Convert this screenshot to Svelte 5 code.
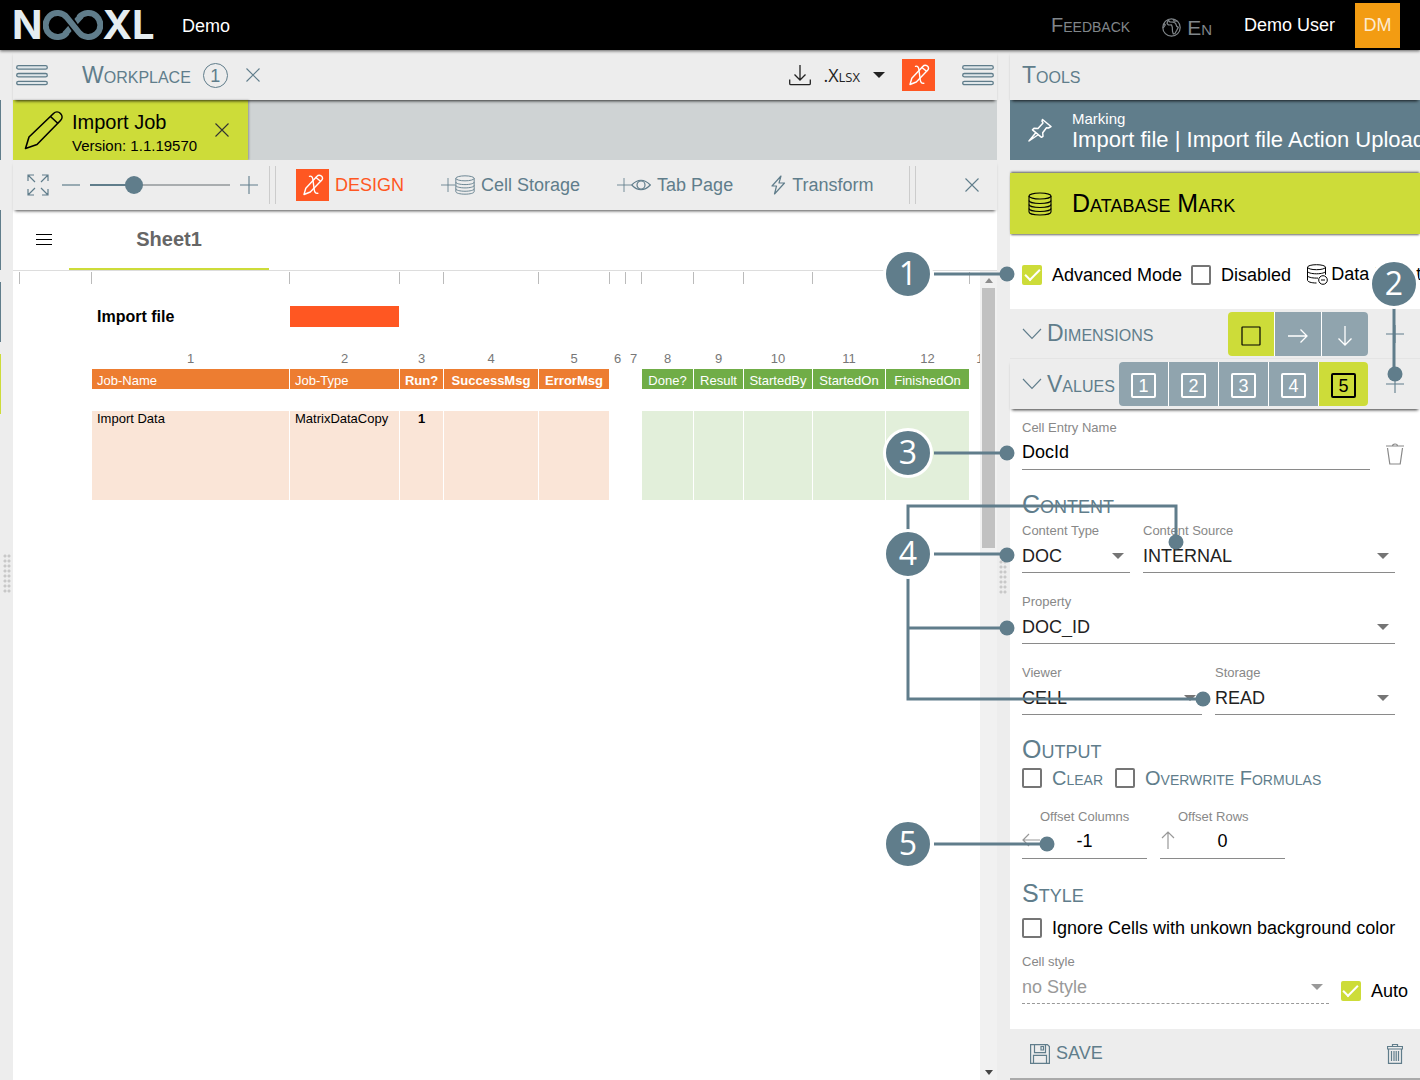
<script lang="ts">
  type Column = {
    width: number;
    index?: string;
    header?: string;
    value?: string;
    kind?: 'input' | 'output';
    align?: 'left' | 'center';
  };

  const columns: Column[] = [
    { width: 72 },
    { width: 198, index: '1', header: 'Job-Name', value: 'Import Data', kind: 'input', align: 'left' },
    { width: 110, index: '2', header: 'Job-Type', value: 'MatrixDataCopy', kind: 'input', align: 'left' },
    { width: 44, index: '3', header: 'Run?', value: '1', kind: 'input' },
    { width: 95, index: '4', header: 'SuccessMsg', kind: 'input' },
    { width: 71, index: '5', header: 'ErrorMsg', kind: 'input' },
    { width: 16, index: '6' },
    { width: 16, index: '7' },
    { width: 52, index: '8', header: 'Done?', kind: 'output' },
    { width: 50, index: '9', header: 'Result', kind: 'output' },
    { width: 69, index: '10', header: 'StartedBy', kind: 'output' },
    { width: 73, index: '11', header: 'StartedOn', kind: 'output' },
    { width: 84, index: '12', header: 'FinishedOn', kind: 'output' },
    { width: 28, index: '13' }
  ];
  const tableWidth = columns.reduce((sum, c) => sum + c.width, 0);

  const callouts = [
    { n: 1, x: 28, y: 274 },
    { n: 2, x: 514, y: 284 },
    { n: 3, x: 28, y: 453 },
    { n: 4, x: 28, y: 554 },
    { n: 5, x: 28, y: 844 }
  ];
  const pins = [[127, 274], [515, 374], [127, 453], [127, 555], [296, 542], [127, 628], [323, 699], [167, 844]];

  let zoom = $state(29);
  let dimension = $state('cell');
  let selectedValue = $state(5);
  let advanced = $state(true);
  let disabled = $state(false);
  let entryName = $state('DocId');
  let clear = $state(false);
  let overwrite = $state(false);
  let ignoreUnknown = $state(false);
  let autoStyle = $state(true);
  let offsetColumns = $state('-1');
  let offsetRows = $state('0');
</script>

{#snippet menuIcon()}
  <svg width="32" height="24" viewBox="0 0 32 24" fill="#dfe6e9" stroke="#607d8b" stroke-width="1.3">
    <rect x="0.7" y="2.700" width="30.600" height="3.400" rx="1.700" />
    <rect x="0.7" y="10.500" width="30.600" height="3.400" rx="1.700" />
    <rect x="0.7" y="18.300" width="30.600" height="3.400" rx="1.700" />
  </svg>
{/snippet}

{#snippet closeIcon()}
  <svg width="16" height="16" viewBox="0 0 16 16" fill="none" stroke="currentColor" stroke-width="1.1">
    <path d="M1.5 1.5l13 13M14.5 1.5l-13 13" />
  </svg>
{/snippet}

{#snippet plusIcon(size: number)}
  <svg width={size} height={size} viewBox="0 0 18 18" fill="none" stroke="currentColor" stroke-width="1.1">
    <path d="M0 9h18M9 0v18" />
  </svg>
{/snippet}

{#snippet designIcon()}
  <svg width="22" height="24" viewBox="0 0 22 24" fill="none" stroke="#fff" stroke-width="1.4" stroke-linejoin="round" stroke-linecap="round">
    <path d="M2 21.500l1.800-6.200L14.800 3.400c1.200-1.300 3.200-1.400 4.600-.4 1.300 1.200 1.300 3 .2 4.300L8.300 19z" />
    <path d="M14 4.500l4.500 3.800" />
    <path d="M7.500 3.300c2-.6 3 .7 3.300 2.700l1.400 10.500c.3 2.500 1.300 4.300 3.600 3.800" />
  </svg>
{/snippet}

{#snippet databaseIcon(size: number)}
  <svg width={size} height={size} viewBox="0 0 24 24" fill="none" stroke="currentColor" stroke-width="1.1">
    <ellipse cx="12" cy="4" rx="11" ry="3" />
    <path d="M1 4v16c0 1.700 4.900 3 11 3s11-1.300 11-3V4" />
    <path d="M1 8.500c0 1.700 4.900 3 11 3s11-1.300 11-3M1 12.500c0 1.700 4.900 3 11 3s11-1.300 11-3M1 16.500c0 1.700 4.900 3 11 3s11-1.300 11-3" />
  </svg>
{/snippet}

{#snippet caret()}
  <svg class="caret" width="12" height="6" viewBox="0 0 12 6"><path d="M0 0h12L6 6z" fill="currentColor" /></svg>
{/snippet}

{#snippet chevron()}
  <svg width="20" height="12" viewBox="0 0 20 12" fill="none" stroke="currentColor" stroke-width="1.1">
    <path d="M1 1l9 9.500L19 1" />
  </svg>
{/snippet}

{#snippet grip()}
  <div class="grip"></div>
{/snippet}

<div class="app">
  <header class="topbar">
    <div class="logo">
      <span>N</span>
      <svg width="60" height="30" viewBox="0 0 60 30" fill="none" stroke="#607d8b" stroke-width="6">
        <path d="M22 24L38 6" />
        <path d="M24 6L36 24" stroke="#000" stroke-width="9" />
        <path d="M24 22.500A12 12 0 1 1 24 7.500L36 22.500A12 12 0 1 0 36 7.500" stroke-linejoin="round" />
      </svg>
      <span>XL</span>
    </div>
    <span class="tenant">Demo</span>
    <a class="feedback" href="#feedback">Feedback</a>
    <button class="language">
      <svg width="19" height="19" viewBox="0 0 19 19" fill="none" stroke="currentColor" stroke-width="1.200" stroke-linejoin="round">
        <circle cx="9.500" cy="9.500" r="8.700" />
        <path d="M6 2.500l-1 3 1.500 1.500 3-.2.8 2.500.2 4 .8 2.700 1.500-.3 2-3.500 1.500-3-1.500-.8-1.300-3.200-2-1-3.500-.2-1.500-1.500zM2 5.500l1.300 1.500L1.200 10M11 1.200l1.300 2 3-.2" />
      </svg>
      <span>En</span>
    </button>
    <span class="user">Demo User</span>
    <span class="avatar">DM</span>
  </header>

  <main class="layout">
    <nav class="rail">
      <span class="rail-tile"></span>
      <span class="rail-tile second"></span>
      <span class="rail-tile"></span>
      <span class="rail-tile active"></span>
      {@render grip()}
    </nav>

    <section class="workplace">
      <div class="panel-head">
        <button class="menu" aria-label="Menu">{@render menuIcon()}</button>
        <h2>Workplace</h2>
        <span class="count">1</span>
        <button class="icon" aria-label="Close workplace">{@render closeIcon()}</button>
        <button class="export">
          <svg width="22" height="22" viewBox="0 0 22 22" fill="none" stroke="currentColor" stroke-width="1.300">
            <path d="M11 1v14.500M5.500 10.500l5.500 5.500 5.500-5.500M.7 15.500v4c0 .8.5 1.200 1.200 1.200h18.200c.8 0 1.200-.5 1.200-1.200v-4" />
          </svg>
          <span>.Xlsx</span>
          {@render caret()}
        </button>
        <button class="design-box" aria-label="Design">{@render designIcon()}</button>
        <button class="menu" aria-label="Tools menu">{@render menuIcon()}</button>
      </div>

      <div class="tabs">
        <div class="tab">
          <svg width="40" height="40" viewBox="0 0 40 40" fill="none" stroke="#000" stroke-width="1.600" stroke-linejoin="round">
            <path d="M1.500 38.500L5 27 29.500 3.500c2-2 5-2 7 0s2 5 0 7L13 34.500z" />
            <path d="M26.500 6.500l7.500 7" />
          </svg>
          <div class="tab-text">
            <strong>Import Job</strong>
            <span>Version: 1.1.19570</span>
          </div>
          <button class="icon" aria-label="Close tab">{@render closeIcon()}</button>
        </div>
      </div>

      <div class="toolbar">
        <div class="zoom">
          <button class="icon" aria-label="Fit">
            <svg width="22" height="22" viewBox="0 0 22 22" fill="none" stroke="currentColor" stroke-width="1.200">
              <path d="M1 7V1h6M1 1l7 7M15 1h6v6M21 1l-7 7M1 15v6h6M1 21l7-7M15 21h6v-6M21 21l-7-7" />
            </svg>
          </button>
          <button class="icon minus" aria-label="Zoom out">
            <svg width="18" height="18" viewBox="0 0 18 18" stroke="currentColor" stroke-width="1.200"><path d="M0 9h18" /></svg>
          </button>
          <input type="range" min="0" max="100" bind:value={zoom} aria-label="Zoom" />
          <button class="icon" aria-label="Zoom in">{@render plusIcon(18)}</button>
        </div>
        <span class="divider"></span>
        <div class="actions">
          <button class="action design">
            <span class="design-box">{@render designIcon()}</span>
            DESIGN
          </button>
          <button class="action">
            <span class="pair">{@render plusIcon(14)}{@render databaseIcon(20)}</span>
            Cell Storage
          </button>
          <button class="action">
            <span class="pair">
              {@render plusIcon(14)}
              <svg width="20" height="20" viewBox="0 0 20 20" fill="none" stroke="currentColor" stroke-width="1.200">
                <path d="M.7 10Q10 .5 19.300 10 10 19.500.7 10z" />
                <circle cx="10" cy="10" r="4" />
              </svg>
            </span>
            Tab Page
          </button>
          <button class="action bolt">
            <svg width="16" height="20" viewBox="0 0 16 20" fill="none" stroke="currentColor" stroke-width="1.200" stroke-linejoin="round">
              <path d="M11 1L2 11h4.500L4.500 19 14.500 8H9z" />
            </svg>
            Transform
          </button>
        </div>
        <span class="divider"></span>
        <button class="icon last" aria-label="Close toolbar">{@render closeIcon()}</button>
      </div>

      <div class="sheet">
        <div class="sheet-tabs">
          <button class="icon dark" aria-label="Sheets">
            <svg width="16" height="12" viewBox="0 0 16 12" stroke="#000" stroke-width="1"><path d="M0 .5h16M0 5.500h16M0 10.500h16" /></svg>
          </button>
          <button class="sheet-tab">Sheet1</button>
        </div>
        <div class="sheet-body">
          <div class="grid-wrap">
            <table style="width: {tableWidth}px">
              <colgroup>
                {#each columns as col}<col style="width: {col.width}px" />{/each}
              </colgroup>
              <tbody>
                <tr class="ruler">{#each columns as _}<td></td>{/each}</tr>
                <tr class="gap"><td colspan={columns.length}></td></tr>
                <tr class="file">
                  <td></td>
                  <th scope="row">Import file</th>
                  <td class="upload"></td>
                  <td colspan={columns.length - 3}></td>
                </tr>
                <tr class="gap"><td colspan={columns.length}></td></tr>
                <tr class="index">
                  {#each columns as col}<td>{col.index ?? ''}</td>{/each}
                </tr>
                <tr class="names">
                  {#each columns as col, i}
                    <td class="{col.kind ?? ''} {col.align ?? ''}" class:bold={i > 2 && i < 6}>{col.header ?? ''}</td>
                  {/each}
                </tr>
                <tr class="gap"><td colspan={columns.length}></td></tr>
                <tr class="values">
                  {#each columns as col, i}
                    <td class="{col.kind ?? ''} {col.align ?? ''}" class:bold={i === 3}>{col.value ?? ''}</td>
                  {/each}
                </tr>
              </tbody>
            </table>
          </div>
          <div class="scrollbar">
            <svg width="8" height="5" viewBox="0 0 8 5"><path d="M0 5h8L4 0z" fill="#8d8d8d" /></svg>
            <div class="thumb"></div>
            <svg width="8" height="5" viewBox="0 0 8 5"><path d="M0 0h8L4 5z" fill="#444" /></svg>
          </div>
        </div>
      </div>
    </section>

    <div class="splitter">{@render grip()}</div>

    <aside class="tools">
      <div class="panel-head"><h2>Tools</h2></div>

      <div class="marking">
        <svg width="24" height="24" viewBox="0 0 24 24" fill="none" stroke="#fff" stroke-width="1.500" stroke-linejoin="round">
          <path d="M14.500 1.500l8.500 7-2.500 1.500-2-.2-3.800 5 .3 3.500-1.500 1-9-7.500 1.500-1.500 4 .2 5-5.500-1-1.800zM8 14.500L1 23l9.500-6.500" />
        </svg>
        <div class="marking-text">
          <span>Marking</span>
          <strong>Import file | Import file Action Upload</strong>
        </div>
      </div>

      <div class="mark-title">
        {@render databaseIcon(24)}
        <h1>Database Mark</h1>
      </div>

      <div class="modes">
        <label class="check"><input type="checkbox" bind:checked={advanced} />Advanced Mode</label>
        <label class="check"><input type="checkbox" bind:checked={disabled} />Disabled</label>
        <button class="reset">
          <svg width="21" height="21" viewBox="0 0 21 21" fill="none" stroke="currentColor" stroke-width="1">
            <ellipse cx="9.500" cy="3.200" rx="9" ry="2.500" />
            <path d="M.5 3.200v13c0 1.500 3.500 2.800 9 2.800M18.500 3.200v7.500M.5 7.200c0 1.500 4 2.600 9 2.600s9-1.100 9-2.600M.5 11.500c0 1.500 4 2.600 9 2.600h1.500" />
            <circle cx="16" cy="16" r="4.300" fill="#fff" />
            <path d="M14 16h4" />
          </svg>
          <span>Data Reset</span>
        </button>
      </div>

      <div class="section">
        {@render chevron()}
        <h3>Dimensions</h3>
        <div class="segments narrow">
          <button class:on={dimension === 'cell'} onclick={() => (dimension = 'cell')} aria-label="Cell">
            <svg width="20" height="20" viewBox="0 0 20 20" fill="none" stroke="currentColor" stroke-width="1.200"><rect x="1" y="1" width="18" height="18" rx="0.500" /></svg>
          </button>
          <button class:on={dimension === 'row'} onclick={() => (dimension = 'row')} aria-label="Row">
            <svg width="20" height="20" viewBox="0 0 20 20" fill="none" stroke="currentColor" stroke-width="1.300"><path d="M0 10h19M12.500 3.500L19 10l-6.500 6.500" /></svg>
          </button>
          <button class:on={dimension === 'column'} onclick={() => (dimension = 'column')} aria-label="Column">
            <svg width="20" height="20" viewBox="0 0 20 20" fill="none" stroke="currentColor" stroke-width="1.300"><path d="M10 0v19M3.500 12.500L10 19l6.500-6.500" /></svg>
          </button>
        </div>
        <button class="icon add" aria-label="Add dimension">{@render plusIcon(18)}</button>
      </div>
      <div class="section last">
        {@render chevron()}
        <h3>Values</h3>
        <div class="segments">
          {#each [1, 2, 3, 4, 5] as n}
            <button class:on={selectedValue === n} onclick={() => (selectedValue = n)}><span>{n}</span></button>
          {/each}
        </div>
        <button class="icon add" aria-label="Add value">{@render plusIcon(18)}</button>
      </div>

      <div class="form">
        <div class="row name">
          <label class="field">
            <span>Cell Entry Name</span>
            <input type="text" bind:value={entryName} />
          </label>
          <button class="icon trash" aria-label="Delete entry">
            <svg width="20" height="22" viewBox="0 0 20 22" fill="none" stroke="currentColor" stroke-width="1.200">
              <path d="M1 3h18M7.500 3c0-2.700 5-2.700 5 0M2.500 5l2.300 16h10.400L17.500 5" />
            </svg>
          </button>
        </div>

        <h4>Content</h4>
        <div class="row content">
          <label class="field">
            <span>Content Type</span>
            <div class="stack"><select><option>DOC</option></select>{@render caret()}</div>
          </label>
          <label class="field">
            <span>Content Source</span>
            <div class="stack"><select><option>INTERNAL</option></select>{@render caret()}</div>
          </label>
        </div>
        <div class="row spaced">
          <label class="field">
            <span>Property</span>
            <div class="stack"><select><option>DOC_ID</option></select>{@render caret()}</div>
          </label>
        </div>
        <div class="row halves spaced">
          <label class="field">
            <span>Viewer</span>
            <div class="stack"><select><option>CELL</option></select>{@render caret()}</div>
          </label>
          <label class="field">
            <span>Storage</span>
            <div class="stack"><select><option>READ</option></select>{@render caret()}</div>
          </label>
        </div>

        <h4>Output</h4>
        <div class="checks">
          <label class="check caps"><input type="checkbox" bind:checked={clear} />Clear</label>
          <label class="check caps"><input type="checkbox" bind:checked={overwrite} />Overwrite Formulas</label>
        </div>
        <div class="offsets spaced">
          <label class="field">
            <span>Offset Columns</span>
            <div class="stack">
              <input type="text" bind:value={offsetColumns} />
              <svg class="lead" width="18" height="18" viewBox="0 0 18 18" fill="none" stroke="currentColor" stroke-width="1.200"><path d="M18 9H1M7 3L1 9l6 6" /></svg>
            </div>
          </label>
          <label class="field">
            <span>Offset Rows</span>
            <div class="stack">
              <input type="text" bind:value={offsetRows} />
              <svg class="lead" width="18" height="18" viewBox="0 0 18 18" fill="none" stroke="currentColor" stroke-width="1.200"><path d="M8 18V1M2 7l6-6 6 6" /></svg>
            </div>
          </label>
        </div>

        <h4>Style</h4>
        <div class="ignore">
          <label class="check"><input type="checkbox" bind:checked={ignoreUnknown} />Ignore Cells with unkown background color</label>
        </div>
        <div class="style-row">
          <label class="field off">
            <span>Cell style</span>
            <div class="stack"><select disabled={autoStyle}><option>no Style</option></select>{@render caret()}</div>
          </label>
          <label class="check"><input type="checkbox" bind:checked={autoStyle} />Auto</label>
        </div>
      </div>

      <footer class="savebar">
        <button class="action">
          <svg width="20" height="20" viewBox="0 0 20 20" fill="none" stroke="currentColor" stroke-width="1.200">
            <path d="M.6.6h16.800l2 2v16.800H.6zM4.500.6v8h11v-8M3.500 19.400v-8h13v8M11 2.500h2.500v3.500H11z" />
          </svg>
          SAVE
        </button>
        <button class="icon" aria-label="Delete">
          <svg width="16" height="20" viewBox="0 0 16 20" fill="none" stroke="currentColor" stroke-width="1.200">
            <path d="M.5 2.500h15v2.500H.5zM5.500 2.500v-2h5v2M1.500 5v14.400h13V5M4.500 7v10M7 7v10M9.200 7v10M11.500 7v10" />
          </svg>
        </button>
      </footer>
    </aside>
  </main>

  <svg class="annotations" width="540" height="900" viewBox="0 0 540 900">
    <g class="lead-lines">
      <path d="M54 274H127" />
      <path d="M514 308V374" />
      <path d="M54 453H127" />
      <path d="M28 530V506H296V542" />
      <path d="M54 554H127" />
      <path d="M28 578V699H323M28 628H127" />
      <path d="M54 844H167" />
    </g>
    {#each pins as [x, y]}
      <circle cx={x} cy={y} r="7.500" fill="#607d8b" />
    {/each}
    {#each callouts as c}
      <circle cx={c.x} cy={c.y} r="23.500" fill="#607d8b" stroke="#fff" stroke-width="3" />
      <text x={c.x} y={c.y + 11} text-anchor="middle">{c.n}</text>
    {/each}
  </svg>
</div>

<style>
  :global(body) {
    margin: 0;
    background: #ededed;
  }

  .app {
    --blue: #607d8b;
    --lime: #cddc39;
    --orange: #ff5722;
    position: relative;
    display: flex;
    flex-direction: column;
    min-height: 100vh;
    overflow: hidden;
    font-family: 'Liberation Sans', Arial, sans-serif;
    font-size: 18px;
    color: #000;
  }

  .app * {
    box-sizing: border-box;
  }

  svg {
    display: block;
    flex: none;
  }

  button,
  input,
  select {
    font: inherit;
    color: inherit;
    background: none;
    border: 0;
    border-radius: 0;
    margin: 0;
    padding: 0;
  }

  button {
    cursor: pointer;
  }

  h1, h2, h3, h4 {
    margin: 0;
    font-weight: 400;
    font-variant: small-caps;
  }

  h2, h3 {
    font-size: 23px;
    color: var(--blue);
  }

  .icon {
    display: flex;
    color: var(--blue);
  }

  /* top bar */
  .topbar {
    display: flex;
    align-items: center;
    height: 50px;
    padding: 0 20px 0 12px;
    background: #000;
    color: #fff;
    box-shadow: 0 1px 3px rgba(0, 0, 0, 0.6);
    z-index: 2;
  }

  .logo {
    display: flex;
    align-items: center;
    width: 146px;
    font-family: Inter, sans-serif;
    font-weight: 700;
    font-size: 40px;
    line-height: 48px;
    color: #e4ecf0;
  }

  .tenant {
    margin: 2px auto 0 24px;
  }

  .feedback {
    font-size: 20px;
    font-variant: small-caps;
    color: #80868a;
    text-decoration: none;
  }

  .language {
    display: flex;
    align-items: center;
    gap: 6px;
    margin: 5px 32px 0 32px;
    font-size: 21px;
    font-variant: small-caps;
    color: #80868a;
  }

  .avatar {
    width: 45px;
    margin-left: 20px;
    background: #f39c12;
    line-height: 45px;
    text-align: center;
    color: #fdebd0;
  }

  .layout {
    flex: 1;
    display: grid;
    grid-template-columns: 13px minmax(0, 1fr) 13px 410px;
  }

  /* left rail and splitter */
  .rail {
    display: flex;
    flex-direction: column;
    padding-top: 50px;
  }

  .rail-tile {
    width: 1px;
    height: 60px;
    margin-bottom: 12px;
    background: var(--blue);
  }

  .rail-tile.second {
    margin-top: 38px;
  }

  .rail-tile.active {
    background: var(--lime);
  }

  .grip {
    width: 8px;
    height: 40px;
    background: radial-gradient(circle at 2px 2px, #c8c8c8 1px, transparent 2px) 0 0 / 4px 5px;
  }

  .rail .grip {
    margin: 128px 0 0 3px;
  }

  .splitter {
    padding: 505px 0 0 2px;
  }

  /* workplace */
  .workplace {
    display: flex;
    flex-direction: column;
    min-width: 0;
  }

  .panel-head {
    display: flex;
    align-items: center;
    height: 50px;
    padding: 0 3px;
    box-shadow: 0 3px 3px -2px rgba(0, 0, 0, 0.8);
    z-index: 1;
  }

  .panel-head .menu {
    display: flex;
  }

  .workplace h2 {
    margin-left: 34px;
  }

  .count {
    width: 25px;
    height: 25px;
    margin: 0 17px 0 12px;
    border: 1px solid var(--blue);
    border-radius: 50%;
    line-height: 24px;
    text-align: center;
    color: var(--blue);
  }

  .export {
    display: flex;
    align-items: center;
    margin-left: auto;
    color: #222;
    font-family: 'Open Sans', sans-serif;
    font-size: 18px;
    font-variant: small-caps;
  }

  .export span {
    margin: 0 13px 0 12px;
  }

  .design-box {
    display: grid;
    place-items: center;
    width: 33px;
    height: 32px;
    background: var(--orange);
  }

  .panel-head .design-box {
    margin: 0 27px 0 17px;
  }

  .tabs {
    height: 60px;
    background: #cfd3d4;
  }

  .tab {
    display: flex;
    align-items: center;
    width: 235px;
    height: 60px;
    padding: 0 18px 0 11px;
    background: var(--lime);
    box-shadow: 1px 0 2px rgba(0, 0, 0, 0.3);
  }

  .tab-text {
    flex: 1;
    display: flex;
    flex-direction: column;
    margin: 7px 0 0 8px;
    font-size: 15px;
    line-height: 24px;
    white-space: nowrap;
  }

  .tab-text strong {
    font-size: 20px;
    font-weight: 400;
  }

  .tab .icon {
    color: #333;
  }

  .toolbar {
    display: flex;
    align-items: center;
    height: 50px;
    padding: 0 17px 0 14px;
    background: #ededed;
    box-shadow: 0 3px 3px -2px rgba(0, 0, 0, 0.7);
    z-index: 1;
  }

  .zoom {
    display: flex;
    align-items: center;
    gap: 10px;
    margin-right: 11px;
  }

  .zoom .minus {
    margin-left: 3px;
  }

  input[type='range'] {
    appearance: none;
    width: 140px;
    height: 18px;
    background: linear-gradient(to right, var(--blue) 32%, #a9adaf 32%) center / 100% 2px no-repeat;
  }

  input[type='range']::-webkit-slider-thumb {
    appearance: none;
    width: 18px;
    height: 18px;
    border-radius: 50%;
    background: var(--blue);
  }

  .divider {
    width: 7px;
    height: 38px;
    border: solid #ccc;
    border-width: 0 1px;
  }

  .actions {
    display: flex;
    gap: 37px;
    margin: 0 auto 0 20px;
  }

  .action {
    display: flex;
    align-items: center;
    gap: 6px;
    color: var(--blue);
    white-space: nowrap;
  }

  .action.design {
    color: var(--orange);
  }

  .pair {
    display: flex;
    align-items: center;
  }

  .actions + .divider {
    margin-right: 48px;
  }

  /* sheet */
  .sheet {
    flex: 1;
    display: flex;
    flex-direction: column;
    background: #fff;
  }

  .sheet-tabs {
    display: flex;
    align-items: center;
    height: 61px;
    padding: 0 23px;
    border-bottom: 1px solid #ddd;
  }

  .sheet-tab {
    width: 200px;
    height: 60px;
    margin-left: 17px;
    border-bottom: 2px solid var(--lime);
    font-size: 20px;
    font-weight: 700;
    color: #666;
  }

  .sheet-body {
    flex: 1;
    display: flex;
  }

  .grid-wrap {
    flex: 1;
    min-width: 0;
    padding: 1px 0 0 6px;
    overflow: hidden;
  }

  table {
    table-layout: fixed;
    border-spacing: 0;
    font-size: 13px;
    line-height: 16px;
  }

  td,
  th {
    height: 22px;
    padding: 0;
    border-left: 1px solid #fff;
    text-align: center;
    white-space: nowrap;
  }

  .ruler td {
    height: 12px;
    border-left-color: #bbb;
  }

  .file td,
  .file th {
    height: 21px;
    line-height: 20px;
  }

  .file th {
    padding-left: 5px;
    text-align: left;
    font-size: 16px;
  }

  .file .upload {
    background: var(--orange);
    background-clip: padding-box;
  }

  .index td {
    height: 20px;
    color: #777;
  }

  .names td {
    height: 20px;
    padding-top: 4px;
    color: #fff;
  }

  .names .input {
    background: #ed7d31;
    background-clip: padding-box;
  }

  .names .output {
    background: #70ad47;
    background-clip: padding-box;
  }

  .values td {
    height: 89px;
    vertical-align: top;
  }

  .values .input {
    background: #fae5d7;
    background-clip: padding-box;
  }

  .values .output {
    background: #e2efda;
    background-clip: padding-box;
  }

  td.left {
    padding-left: 5px;
    text-align: left;
  }

  .bold {
    font-weight: 700;
  }

  .scrollbar {
    display: flex;
    flex-direction: column;
    align-items: center;
    width: 17px;
    padding: 7px 0 5px;
    background: #f1f1f1;
  }

  .thumb {
    width: 13px;
    height: 260px;
    margin: 5px 0 auto;
    background: #c1c1c1;
  }

  /* tools */
  .tools {
    display: flex;
    flex-direction: column;
    min-width: 0;
  }

  .tools .panel-head {
    padding: 0 12px;
  }

  .marking,
  .mark-title {
    display: flex;
    align-items: center;
    height: 60px;
    padding-left: 18px;
  }

  .marking {
    gap: 20px;
    margin-bottom: 13px;
    background: var(--blue);
    color: #fff;
    overflow: hidden;
  }

  .marking-text {
    display: flex;
    flex-direction: column;
    padding-top: 2px;
    font-size: 15px;
    line-height: 18px;
    white-space: nowrap;
  }

  .marking-text strong {
    font-size: 22px;
    line-height: 24px;
    font-weight: 400;
  }

  .mark-title {
    gap: 20px;
    height: 61px;
    background: var(--lime);
    box-shadow: 0 2px 2px -1px rgba(0, 0, 0, 0.6), 0 -2px 2px -1px rgba(0, 0, 0, 0.6);
    z-index: 1;
  }

  h1 {
    font-size: 25px;
  }

  .modes {
    display: flex;
    align-items: center;
    height: 75px;
    padding: 6px 0 0 12px;
    background: #fff;
    white-space: nowrap;
    overflow: hidden;
  }

  .check {
    display: flex;
    align-items: center;
    gap: 10px;
    margin-right: 9px;
    line-height: 20px;
    white-space: nowrap;
  }

  .check.caps {
    font-size: 20px;
    font-variant: small-caps;
    color: var(--blue);
    margin-right: 12px;
  }

  input[type='checkbox'] {
    appearance: none;
    display: grid;
    place-items: center;
    flex: none;
    width: 20px;
    height: 20px;
    border: 2px solid #757575;
    border-radius: 2px;
    background: #fff;
  }

  input[type='checkbox']:checked {
    border-color: var(--lime);
    background: var(--lime);
  }

  input[type='checkbox']:checked::before {
    content: '';
    width: 13px;
    height: 6px;
    margin-bottom: 4px;
    border: solid #fff;
    border-width: 0 0 2px 2px;
    transform: rotate(-45deg);
  }

  .reset {
    display: flex;
    align-items: center;
    gap: 3px;
    margin-left: 7px;
  }

  .section {
    display: flex;
    align-items: center;
    height: 50px;
    padding-left: 12px;
    border-bottom: 1px solid #e4e4e4;
    color: var(--blue);
  }

  .section h3 {
    margin-left: 5px;
  }

  .section.last {
    border-bottom: 0;
    box-shadow: 0 3px 3px -2px rgba(0, 0, 0, 0.8);
    z-index: 1;
  }

  .segments {
    display: flex;
    gap: 1px;
    margin-left: auto;
    border-radius: 4px;
    background: #fff;
    overflow: hidden;
  }

  .segments button {
    display: grid;
    place-items: center;
    width: 49px;
    height: 44px;
    padding-top: 2px;
    background: #90a4ae;
    color: #fff;
  }

  .segments.narrow button {
    width: 46px;
    padding-top: 4px;
  }

  .segments button.on {
    background: var(--lime);
    color: #000;
  }

  .segments span {
    width: 25px;
    height: 25px;
    border: 2px solid #fff;
    border-radius: 2px;
    line-height: 22px;
    text-align: center;
  }

  .segments .on span {
    border-color: #000;
  }

  .add {
    margin: 0 16px 0 18px;
  }

  .form {
    flex: 1;
    padding: 11px 12px 20px;
    background: #fff;
  }

  h4 {
    margin: 19px 0 4px;
    font-size: 25px;
    line-height: 30px;
    color: var(--blue);
  }

  .row {
    display: grid;
    gap: 13px;
    margin-right: 13px;
  }

  .row.name {
    grid-template-columns: minmax(0, 1fr) 20px;
    gap: 15px;
    align-items: center;
    margin-right: 3px;
  }

  .row.content {
    grid-template-columns: 3fr 7fr;
  }

  .row.halves {
    grid-template-columns: 1fr 1fr;
  }

  .spaced {
    margin-top: 21px;
  }

  .trash {
    margin-top: 18px;
    color: #888;
  }

  .field {
    display: block;
    min-width: 0;
  }

  .field > span {
    display: block;
    font-size: 13px;
    line-height: 16px;
    color: #888;
  }

  .field input,
  .field select {
    display: block;
    appearance: none;
    width: 100%;
    height: 34px;
    border-bottom: 1px solid #8a8a8a;
    outline: 0;
  }

  .field select {
    color: #222;
  }

  .stack {
    display: grid;
    align-items: center;
  }

  .stack > :global(*) {
    grid-area: 1 / 1;
  }

  .stack .caret {
    justify-self: end;
    margin-right: 6px;
    color: #757575;
    pointer-events: none;
  }

  .checks,
  .offsets {
    display: flex;
  }

  .offsets {
    gap: 13px;
  }

  .offsets .field {
    width: 125px;
  }

  .offsets .field > span {
    padding-left: 18px;
  }

  .offsets input {
    text-align: center;
  }

  .lead {
    margin-bottom: 4px;
    color: #999;
  }

  .ignore {
    padding: 6px 0 16px;
  }

  .style-row {
    display: flex;
    align-items: flex-end;
    gap: 12px;
  }

  .style-row .field {
    flex: 1;
  }

  .style-row .check {
    margin: 0 0 3px;
  }

  .field.off select {
    border-bottom: 1px dashed #999;
    color: #999;
    opacity: 1;
  }

  .field.off .caret {
    color: #999;
  }

  .savebar {
    display: flex;
    align-items: center;
    justify-content: space-between;
    height: 51px;
    padding: 0 17px 0 20px;
    border-bottom: 2px solid #aaa;
  }

  /* numbered callouts */
  .annotations {
    position: absolute;
    top: 0;
    right: 0;
    z-index: 3;
    pointer-events: none;
  }

  .lead-lines {
    fill: none;
    stroke: #607d8b;
    stroke-width: 3;
  }

  .annotations text {
    font-family: 'Open Sans', sans-serif;
    font-size: 32px;
    fill: #fff;
  }
</style>
